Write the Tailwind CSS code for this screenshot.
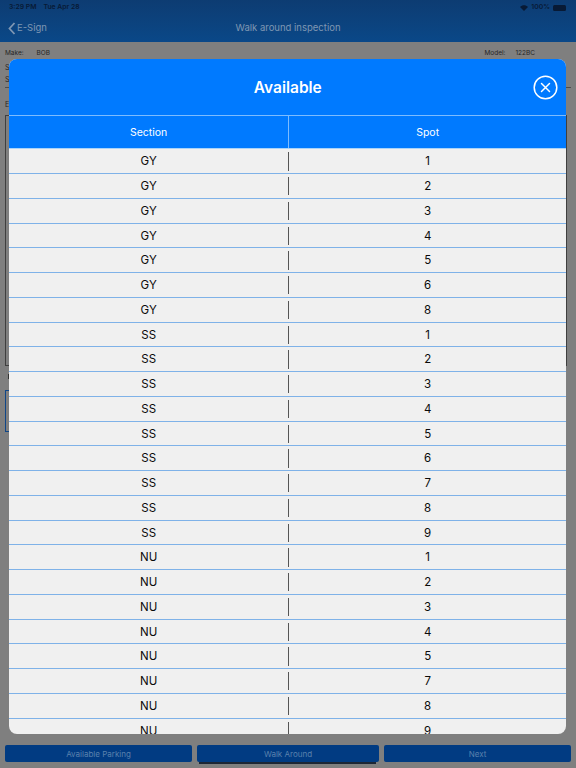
<!DOCTYPE html>
<html><head><meta charset="utf-8">
<script src="https://cdn.jsdelivr.net/npm/@tailwindcss/browser@4"></script>
</head>
<body class="m-0">
<div class="relative w-[576px] h-[768px] overflow-hidden bg-[#7f7f7f] font-['Inter','Liberation_Sans',sans-serif]">
  <!-- Background page -->
  <div class="h-[42px] bg-gradient-to-b from-[#0d3c72] to-[#0a4888]">
    <div class="h-[14px] pt-px flex items-center justify-between pl-[9px] pr-[10px] text-[6.800px] text-[#081a35] font-semibold">
      <div class="flex gap-[7px]"><span>3:29 PM</span><span>Tue Apr 28</span></div>
      <div class="flex items-center gap-[3px]">
        <svg width="8" height="6" viewBox="0 0 16 12"><path d="M8 12 0 4c4.500-4.500 11.500-4.500 16 0z" fill="#081a35"/></svg>
        <span>100%</span>
        <span class="w-[13px] h-[6px] rounded-[1.500px] bg-[#081a35]"></span>
      </div>
    </div>
    <div class="relative h-[28px] flex items-center justify-center text-[#7f97b3]">
      <div class="absolute left-[8px] top-[7px] flex items-center gap-[1px]">
        <svg width="8" height="13" viewBox="0 0 8 13"><path d="M6.500 1 1.500 6.500l5 5.500" fill="none" stroke="#7f97b3" stroke-width="1.800"/></svg>
        <span class="text-[9.500px]">E-Sign</span>
      </div>
      <span class="text-[9.500px]">Walk around inspection</span>
    </div>
  </div>
  <div class="relative h-[726px]">
    <div class="flex justify-between pl-[5px] pr-[41px] pt-[7px] text-[6.500px] text-[#262626]">
      <div class="flex gap-[13px]"><span>Make:</span><span>BOB</span></div>
      <div class="flex gap-[10px]"><span>Model:</span><span>122BC</span></div>
    </div>
    <div class="absolute left-[5px] top-[21px] text-[7px] text-[#262626]">S</div>
    <div class="absolute left-[5px] top-[33px] text-[7px] text-[#262626]">S</div>
    <div class="absolute left-[5px] top-[45px] w-[566px] h-px bg-[#4d4d4d]"></div>
    <div class="absolute left-[5px] top-[58px] text-[7px] text-[#262626]">E</div>
    <div class="absolute left-[5px] top-[73px] w-[562px] h-[251px] border border-[#3f3f3f]"></div>
    <div class="absolute left-[8px] top-[332px] w-px h-[5px] bg-[#333]"></div>
    <div class="absolute left-[5px] top-[348px] w-[20px] h-[42px] border border-[#0f4688]"></div>
    <div class="absolute left-[5px] right-[5px] bottom-[6px] h-[17px] flex gap-[5px] text-[8px] text-[#5a81ad]">
      <div class="w-[187px] rounded-[2px] bg-[#013b82] flex items-center justify-center">Available Parking</div>
      <div class="relative w-[182px] rounded-[2px] bg-[#013b82] flex items-center justify-center">Walk Around
        <div class="absolute left-[2px] right-[3px] -bottom-[1.500px] h-[2px] bg-[#1d2635]"></div>
      </div>
      <div class="flex-1 rounded-[2px] bg-[#013b82] flex items-center justify-center">Next</div>
    </div>
  </div>

  <!-- Modal -->
  <div class="absolute left-[9.300px] top-[58.750px] w-[557px] h-[675px] rounded-[8px] overflow-hidden bg-[#f0f0f0]">
    <div class="relative h-[56px] pt-px bg-[#007aff] flex items-center justify-center text-white text-[15.500px] font-semibold">
      Available
      <svg class="absolute left-[523.500px] top-[15.750px]" width="25" height="25" viewBox="0 0 25 25" fill="none" stroke="#fff"><circle cx="12.500" cy="12.500" r="11.300" stroke-width="1.500"/><path d="M8.500 8.500l8 8M16.500 8.500l-8 8" stroke-width="1.500" stroke-linecap="round"/></svg>
    </div>
    <div class="h-[34.500px] grid grid-cols-[278.700px_1fr] bg-[#007aff] border-t border-[#7dbcff] border-b border-b-[#a9d4fa] text-white text-[10.500px]">
      <div class="flex items-center justify-center pt-px">Section</div>
      <div class="flex items-center justify-center pt-px border-l border-[#7dbcff]">Spot</div>
    </div>
    <div class="text-[11.500px] text-[#0a0a0a] [&>div]:h-[24.750px] [&>div]:grid [&>div]:grid-cols-[278.700px_1fr] [&>div]:border-b [&>div]:border-[#7fb2e8] [&_span]:flex [&_span]:items-center [&_span]:justify-center [&_span]:pt-px [&_span:last-child]:my-[3px] [&_span:last-child]:border-l [&_span:last-child]:border-[#555]">
      <div><span>GY</span><span>1</span></div>
      <div><span>GY</span><span>2</span></div>
      <div><span>GY</span><span>3</span></div>
      <div><span>GY</span><span>4</span></div>
      <div><span>GY</span><span>5</span></div>
      <div><span>GY</span><span>6</span></div>
      <div><span>GY</span><span>8</span></div>
      <div><span>SS</span><span>1</span></div>
      <div><span>SS</span><span>2</span></div>
      <div><span>SS</span><span>3</span></div>
      <div><span>SS</span><span>4</span></div>
      <div><span>SS</span><span>5</span></div>
      <div><span>SS</span><span>6</span></div>
      <div><span>SS</span><span>7</span></div>
      <div><span>SS</span><span>8</span></div>
      <div><span>SS</span><span>9</span></div>
      <div><span>NU</span><span>1</span></div>
      <div><span>NU</span><span>2</span></div>
      <div><span>NU</span><span>3</span></div>
      <div><span>NU</span><span>4</span></div>
      <div><span>NU</span><span>5</span></div>
      <div><span>NU</span><span>7</span></div>
      <div><span>NU</span><span>8</span></div>
      <div><span>NU</span><span>9</span></div>
    </div>
  </div>
</div>
</body></html>
